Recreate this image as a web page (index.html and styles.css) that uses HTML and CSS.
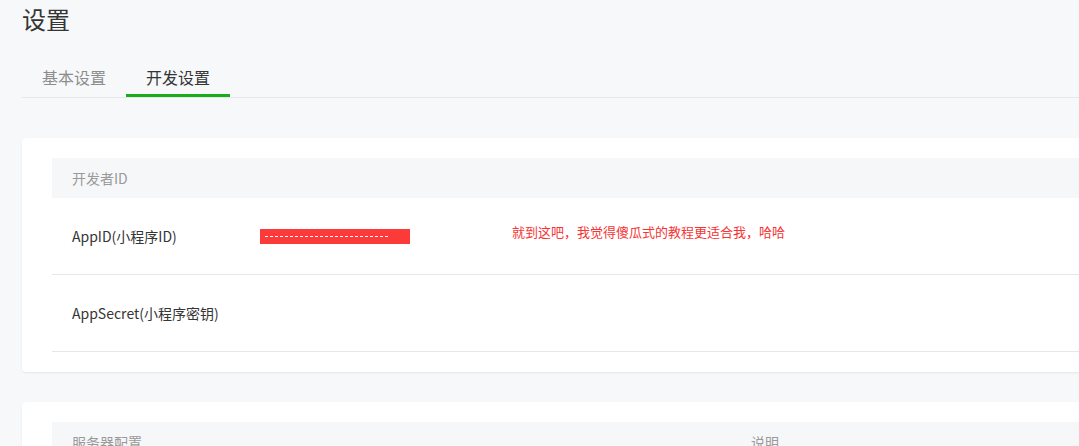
FILE: index.html
```html
<!DOCTYPE html>
<html lang="zh-CN">
<head>
    <meta charset="UTF-8">
    <title>设置</title>
    <link rel="stylesheet" href="styles.css">
</head>
<body>
    <div class="page">
        <h2 class="page-title">设置</h2>
        <div class="tabs">
            <a class="tab">基本设置</a>
            <a class="tab active">开发设置</a>
        </div>

        <div class="card">
            <div class="card-head">开发者ID</div>
            <div class="row">
                <div class="row-label">AppID(小程序ID)</div>
                <div class="row-value">
                    <span class="masked"><i></i></span>
                    <span class="note">就到这吧，我觉得傻瓜式的教程更适合我，哈哈</span>
                </div>
            </div>
            <div class="row">
                <div class="row-label">AppSecret(小程序密钥)</div>
                <div class="row-value"></div>
            </div>
        </div>

        <div class="card">
            <div class="card-head cols">
                <span>服务器配置</span>
                <span>说明</span>
            </div>
        </div>
    </div>
</body>
</html>
```

FILE: styles.css
```css
html, body {
    margin: 0;
    padding: 0;
    background: #f7f8fa;
    overflow: hidden;
}
body {
    font-family: "Noto Sans CJK SC", "Noto Sans", sans-serif;
    color: #353535;
    font-size: 14px;
}
.page {
    width: 1140px;
    padding-left: 22px;
}
.page-title {
    margin: 0;
    font-size: 24px;
    font-weight: normal;
    line-height: 38px;
    color: #353535;
}
.tabs {
    display: flex;
    margin-top: 20px;
    height: 39px;
    border-bottom: 1px solid #e7e7eb;
}
.tab {
    padding: 0 20px;
    width: 64px;
    line-height: 38px;
    font-size: 16px;
    color: #8d8d8d;
    border-bottom: 3px solid transparent;
    cursor: pointer;
}
.tab.active {
    color: #353535;
    border-bottom-color: #1aad19;
}
.card {
    margin-top: 40px;
    background: #fff;
    border-radius: 4px;
    box-shadow: 0 1px 2px rgba(0, 0, 0, 0.08);
    padding: 20px 30px;
}
.card + .card {
    margin-top: 30px;
}
.card-head {
    height: 40px;
    line-height: 40px;
    padding-left: 20px;
    background: #f6f7f9;
    color: #9a9a9a;
}
.card-head.cols {
    display: grid;
    grid-template-columns: 679px 1fr;
}
.row {
    display: flex;
    align-items: center;
    height: 76px;
    padding-left: 20px;
    border-bottom: 1px solid #e7e7eb;
}
.row-label {
    width: 188px;
}
.row-value {
    display: flex;
    align-items: center;
}
.masked {
    display: flex;
    align-items: center;
    width: 150px;
    height: 15px;
    background: #fc3a3a;
}
.masked i {
    display: block;
    margin-left: 5px;
    width: 123px;
    border-top: 1px dashed #fff;
}
.note {
    margin-left: 102px;
    margin-bottom: 9px;
    font-size: 13px;
    color: #f53535;
}
```
